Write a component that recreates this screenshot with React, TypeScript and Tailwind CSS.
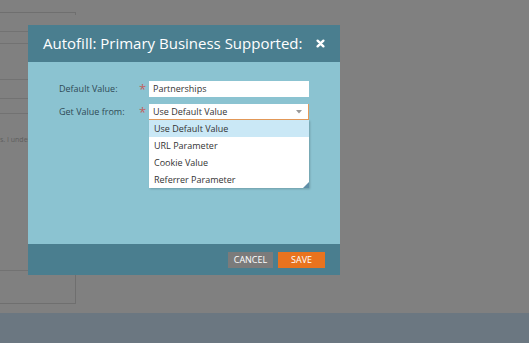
import React from 'react';

const options = ['Use Default Value', 'URL Parameter', 'Cookie Value', 'Referrer Parameter'];

export default function App() {
  return (
    <div className="relative w-[529px] h-[343px] overflow-hidden bg-[#808080] font-['Open_Sans',sans-serif] flex flex-col">
      {/* Page behind the overlay */}
      <div className="relative flex-1">
        <div className="absolute left-0 top-[12px] w-[76px] h-[3px] border-t border-r border-[#6f6f6f]" />
        <div className="absolute left-0 top-[31px] w-[28px] border-t border-[#727272]" />
        <div className="absolute left-0 top-[43px] w-[28px] border-t border-[#727272]" />
        <div className="absolute left-0 top-[79px] w-[28px] border-t border-[#727272]" />
        <div className="absolute left-0 top-[98px] w-[28px] border-t border-[#727272]" />
        <div className="absolute left-0 top-[113px] w-[28px] border-t border-[#727272]" />
        <div className="absolute left-0 top-[135px] text-[7px] text-[#5e5e5e] whitespace-nowrap">s. I under</div>
        <div className="absolute left-0 top-[270px] w-[28px] border-t border-[#727272]" />
        <div className="absolute left-0 top-[270px] w-[76px] h-[34px] border-r border-b border-[#6f6f6f]" />

        {/* Dialog */}
        <div className="absolute left-[28px] top-[25px] w-[312px] flex flex-col">
          <div className="h-[37px] bg-[#4a7e8f] flex items-center justify-between pl-[15px] pr-[15px]">
            <span className="text-white text-[15px] leading-none whitespace-nowrap">Autofill: Primary Business Supported:</span>
            <svg width="9" height="9" viewBox="0 0 10 10">
              <path d="M1.8 1.8 L8.2 8.2 M8.2 1.8 L1.8 8.2" stroke="#fff" strokeWidth="2.6" strokeLinecap="round" />
            </svg>
          </div>
          <div className="h-[182px] bg-[#8bc3d1] pt-[19px] pl-[31px] text-[9px] text-[#2f4a55]">
            <div className="flex items-center h-[16px]">
              <span className="w-[80px]">Default Value:</span>
              <span className="w-[10px] text-[#c2625f] text-[13px] leading-none">*</span>
              <div className="w-[160px] h-[16px] bg-white flex items-center pl-[4px] text-[#333]">Partnerships</div>
            </div>
            <div className="flex items-start mt-[7px]">
              <span className="w-[80px] h-[16px] flex items-center">Get Value from:</span>
              <span className="w-[10px] h-[16px] flex items-center text-[#c2625f] text-[13px] leading-none">*</span>
              <div className="w-[160px] flex flex-col">
                <div className="h-[16px] bg-white border-b border-r border-[#e59a5a] flex items-center justify-between pl-[4px] pr-[6px] text-[#333]">
                  <span>Use Default Value</span>
                  <svg width="6" height="4" viewBox="0 0 6 4">
                    <path d="M0 0 L6 0 L3 3.5 Z" fill="#999" />
                  </svg>
                </div>
                <div className="relative bg-white flex flex-col shadow-[1px_1px_2px_rgba(0,0,0,0.2)]">
                  {options.map((o, i) => (
                    <div
                      key={o}
                      className={`h-[17px] flex items-center pl-[5px] text-[#333] ${i === 0 ? 'bg-[#cae8f6]' : ''}`}
                    >
                      {o}
                    </div>
                  ))}
                  <svg className="absolute right-0 bottom-0" width="6" height="6" viewBox="0 0 6 6">
                    <path d="M6 0 L6 6 L0 6 Z" fill="#5f8fa8" />
                  </svg>
                </div>
              </div>
            </div>
          </div>
          <div className="h-[31px] bg-[#4a7e8f] flex items-center justify-end gap-[5px] pr-[15px]">
            <button className="w-[45px] h-[16px] bg-[#7b7b7b] text-white text-[9px] leading-none">CANCEL</button>
            <button className="w-[47px] h-[16px] bg-[#e8731e] text-white text-[9px] leading-none">SAVE</button>
          </div>
        </div>
      </div>
      <div className="h-[30px] bg-[#6b7781]" />
    </div>
  );
}
